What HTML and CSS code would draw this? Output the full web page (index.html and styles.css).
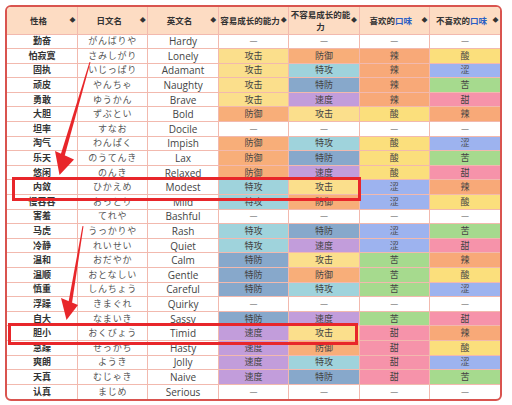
FILE: index.html
```html
<!DOCTYPE html>
<html lang="zh">
<head>
<meta charset="utf-8">
<link rel="stylesheet" href="styles.css">
</head>
<body>
<div class="page">
<div class="wrap">
<table class="nat">
<colgroup><col><col><col><col><col><col><col></colgroup>
<thead>
<tr>
<th><div class="h"><span class="t">性格</span><i class="s">◆</i></div></th>
<th><div class="h"><span class="t">日文名</span><i class="s">◆</i></div></th>
<th><div class="h"><span class="t">英文名</span><i class="s">◆</i></div></th>
<th><div class="h"><span class="t nw">容易成长的能力</span><i class="s">◆</i></div></th>
<th><div class="h"><span class="t">不容易成长的能力</span><i class="s">◆</i></div></th>
<th><div class="h"><span class="t">喜欢的<a class="lk">口味</a></span><i class="s">◆</i></div></th>
<th><div class="h"><span class="t">不喜欢的<a class="lk">口味</a></span><i class="s">◆</i></div></th>
</tr>
</thead>
<tbody>
<tr><td class="cn">勤奋</td><td class="jp">がんばりや</td><td class="en">Hardy</td><td class="no">—</td><td class="no">—</td><td class="no">—</td><td class="no">—</td></tr>
<tr><td class="cn">怕寂寞</td><td class="jp">さみしがり</td><td class="en">Lonely</td><td class="atk">攻击</td><td class="def">防御</td><td class="la">辣</td><td class="su">酸</td></tr>
<tr><td class="cn">固执</td><td class="jp">いじっぱり</td><td class="en">Adamant</td><td class="atk">攻击</td><td class="spa">特攻</td><td class="la">辣</td><td class="se">涩</td></tr>
<tr><td class="cn">顽皮</td><td class="jp">やんちゃ</td><td class="en">Naughty</td><td class="atk">攻击</td><td class="spd">特防</td><td class="la">辣</td><td class="ku">苦</td></tr>
<tr><td class="cn">勇敢</td><td class="jp">ゆうかん</td><td class="en">Brave</td><td class="atk">攻击</td><td class="spe">速度</td><td class="la">辣</td><td class="ti">甜</td></tr>
<tr><td class="cn">大胆</td><td class="jp">ずぶとい</td><td class="en">Bold</td><td class="def">防御</td><td class="atk">攻击</td><td class="su">酸</td><td class="la">辣</td></tr>
<tr><td class="cn">坦率</td><td class="jp">すなお</td><td class="en">Docile</td><td class="no">—</td><td class="no">—</td><td class="no">—</td><td class="no">—</td></tr>
<tr><td class="cn">淘气</td><td class="jp">わんぱく</td><td class="en">Impish</td><td class="def">防御</td><td class="spa">特攻</td><td class="su">酸</td><td class="se">涩</td></tr>
<tr><td class="cn">乐天</td><td class="jp">のうてんき</td><td class="en">Lax</td><td class="def">防御</td><td class="spd">特防</td><td class="su">酸</td><td class="ku">苦</td></tr>
<tr><td class="cn">悠闲</td><td class="jp">のんき</td><td class="en">Relaxed</td><td class="def">防御</td><td class="spe">速度</td><td class="su">酸</td><td class="ti">甜</td></tr>
<tr><td class="cn">内敛</td><td class="jp">ひかえめ</td><td class="en">Modest</td><td class="spa">特攻</td><td class="atk">攻击</td><td class="se">涩</td><td class="la">辣</td></tr>
<tr><td class="cn">慢吞吞</td><td class="jp">おっとり</td><td class="en">Mild</td><td class="spa">特攻</td><td class="def">防御</td><td class="se">涩</td><td class="su">酸</td></tr>
<tr><td class="cn">害羞</td><td class="jp">てれや</td><td class="en">Bashful</td><td class="no">—</td><td class="no">—</td><td class="no">—</td><td class="no">—</td></tr>
<tr><td class="cn">马虎</td><td class="jp">うっかりや</td><td class="en">Rash</td><td class="spa">特攻</td><td class="spd">特防</td><td class="se">涩</td><td class="ku">苦</td></tr>
<tr><td class="cn">冷静</td><td class="jp">れいせい</td><td class="en">Quiet</td><td class="spa">特攻</td><td class="spe">速度</td><td class="se">涩</td><td class="ti">甜</td></tr>
<tr><td class="cn">温和</td><td class="jp">おだやか</td><td class="en">Calm</td><td class="spd">特防</td><td class="atk">攻击</td><td class="ku">苦</td><td class="la">辣</td></tr>
<tr><td class="cn">温顺</td><td class="jp">おとなしい</td><td class="en">Gentle</td><td class="spd">特防</td><td class="def">防御</td><td class="ku">苦</td><td class="su">酸</td></tr>
<tr><td class="cn">慎重</td><td class="jp">しんちょう</td><td class="en">Careful</td><td class="spd">特防</td><td class="spa">特攻</td><td class="ku">苦</td><td class="se">涩</td></tr>
<tr><td class="cn">浮躁</td><td class="jp">きまぐれ</td><td class="en">Quirky</td><td class="no">—</td><td class="no">—</td><td class="no">—</td><td class="no">—</td></tr>
<tr><td class="cn">自大</td><td class="jp">なまいき</td><td class="en">Sassy</td><td class="spd">特防</td><td class="spe">速度</td><td class="ku">苦</td><td class="ti">甜</td></tr>
<tr><td class="cn">胆小</td><td class="jp">おくびょう</td><td class="en">Timid</td><td class="spe">速度</td><td class="atk">攻击</td><td class="ti">甜</td><td class="la">辣</td></tr>
<tr><td class="cn">急躁</td><td class="jp">せっかち</td><td class="en">Hasty</td><td class="spe">速度</td><td class="def">防御</td><td class="ti">甜</td><td class="su">酸</td></tr>
<tr><td class="cn">爽朗</td><td class="jp">ようき</td><td class="en">Jolly</td><td class="spe">速度</td><td class="spa">特攻</td><td class="ti">甜</td><td class="se">涩</td></tr>
<tr><td class="cn">天真</td><td class="jp">むじゃき</td><td class="en">Naive</td><td class="spe">速度</td><td class="spd">特防</td><td class="ti">甜</td><td class="ku">苦</td></tr>
<tr><td class="cn">认真</td><td class="jp">まじめ</td><td class="en">Serious</td><td class="no">—</td><td class="no">—</td><td class="no">—</td><td class="no">—</td></tr>
</tbody>
</table>
</div>
<div class="mark mark1"></div>
<div class="mark mark2"></div>
<svg class="arrows" width="512" height="405" viewBox="0 0 512 405">
<polygon points="89.5,62 90.5,62.3 63.5,160 59.5,158.5" fill="#e8262a"/>
<polygon points="55,151 74,159.5 59.5,175" fill="#e8262a"/>
<polygon points="82.5,226 83.5,226.3 72,303 68.5,302" fill="#e8262a"/>
<polygon points="61,298 78,305 66.5,320" fill="#e8262a"/>
</svg>
</div>
</body>
</html>
```
FILE: styles.css
```css
html, body {
  margin: 0;
  padding: 0;
  background: #ffffff;
}
.page {
  position: relative;
  width: 512px;
  height: 405px;
  padding: 5px 0 0 5px;
  box-sizing: border-box;
}
.wrap {
  width: 497px;
  border: 2px solid #d9544f;
  border-radius: 6px;
  overflow: hidden;
  box-sizing: border-box;
  background: #fff;
}
.nat {
  width: 100%;
  border-collapse: collapse;
  table-layout: fixed;
  font-family: "Noto Sans CJK SC", "Noto Sans", sans-serif;
  font-size: 9px;
  color: #333;
}
.nat th, .nat td {
  border: 1px solid #f2b9ae;
  padding: 0;
  text-align: center;
  vertical-align: middle;
}
.nat tr > :first-child { border-left: none; }
.nat tr > :last-child { border-right: none; }
.nat thead th { border-top: none; }
.nat tbody tr:last-child td { border-bottom: none; }
.nat thead tr {
  height: 27px;
}
.nat th {
  background: #fddcc3;
  font-weight: bold;
  font-size: 8.5px;
  line-height: 12px;
  color: #333;
}
.h {
  display: flex;
  align-items: center;
  padding: 0 1px 0 1px;
}
.t {
  flex: 1;
  min-width: 0;
  text-align: center;
}
.nw { white-space: nowrap; }
.s {
  font-style: normal;
  font-size: 6px;
  width: 7px;
  flex: none;
  text-align: center;
  color: #333;
}
.lk {
  color: #2b5fc4;
}
.nat tbody tr {
  height: 14.6px;
}
.nat td {
  line-height: 12px;
  height: 13px;
}
.cn {
  font-weight: bold;
  color: #333;
}
.jp {
  color: #555;
  font-family: "Noto Sans CJK JP", sans-serif;
  letter-spacing: 0.8px;
}
.en {
  font-family: "Open Sans", "Noto Sans", sans-serif;
  font-size: 10px;
  color: #444;
}
.no { color: #666; }
.atk { background: #fbdf8c; }
.def { background: #f8ae79; }
.spa { background: #9fd3dc; }
.spd { background: #87a8cb; }
.spe { background: #c29ddb; }
.la { background: #f8a978; }
.su { background: #fbdf7c; }
.se { background: #9db3ef; }
.ku { background: #a6da8e; }
.ti { background: #f693aa; }
.atk, .def, .spa, .spd, .spe, .la, .su, .se, .ku, .ti {
  color: #444;
}
.mark {
  position: absolute;
  border: 3px solid #e8262a;
  box-sizing: border-box;
}
.mark1 {
  left: 12px;
  top: 177px;
  width: 349px;
  height: 24px;
}
.mark2 {
  left: 8px;
  top: 323px;
  width: 350px;
  height: 22px;
}
.arrows {
  position: absolute;
  left: 0;
  top: 0;
}
```
